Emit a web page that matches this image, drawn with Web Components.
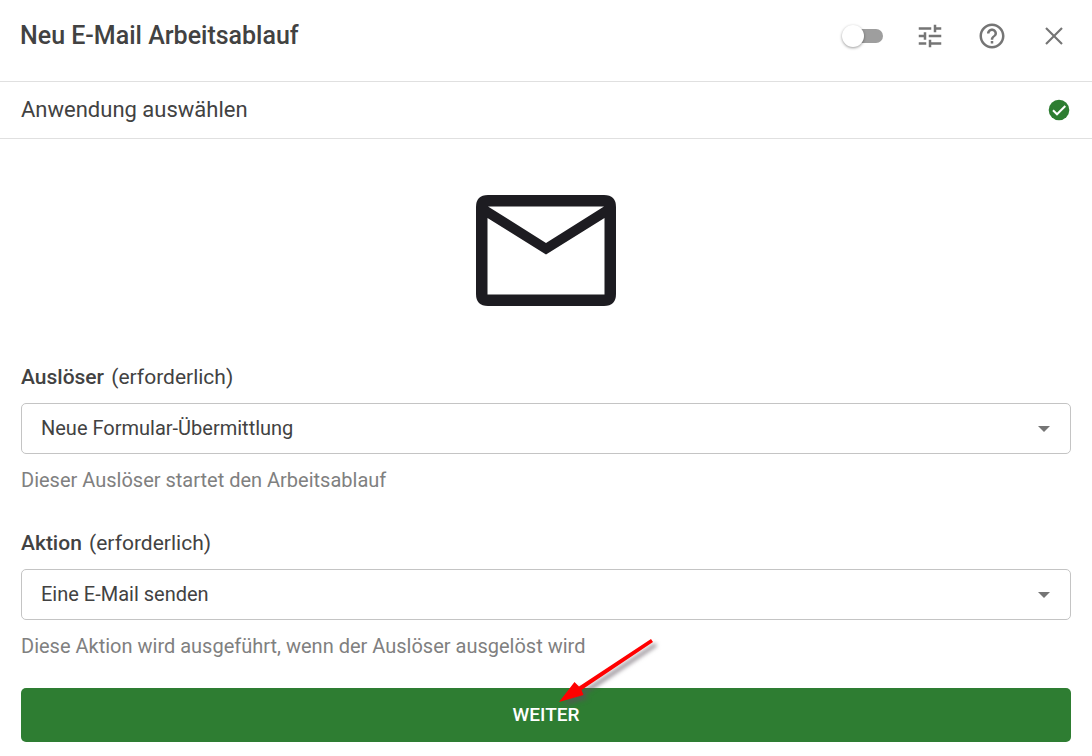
<!DOCTYPE html>
<html lang="de">
<head>
<meta charset="utf-8">
<meta name="viewport" content="width=device-width, initial-scale=1">
<title>Neu E-Mail Arbeitsablauf</title>
<style>
  body {
    margin: 0;
    background: #fff;
    color: #424242;
    font-family: Roboto, "Liberation Sans", sans-serif;
    font-size: 20px;
    line-height: 24px;
  }
</style>
</head>
<body>
<workflow-dialog>
  <dialog-header slot="header">Neu E-Mail Arbeitsablauf</dialog-header>
  <step-heading>Anwendung auswählen</step-heading>
  <app-picture></app-picture>
  <workflow-form>
    <select-field label="Auslöser" option="Neue Formular-Übermittlung">Dieser Auslöser startet den Arbeitsablauf</select-field>
    <select-field label="Aktion" option="Eine E-Mail senden">Diese Aktion wird ausgeführt, wenn der Auslöser ausgelöst wird</select-field>
    <submit-button>WEITER</submit-button>
  </workflow-form>
</workflow-dialog>

<script>
  class BaseElement extends HTMLElement {
    connectedCallback() {
      if (this.shadowRoot) return;
      this.attachShadow({ mode: "open" }).innerHTML = this.render();
    }
  }

  customElements.define("workflow-dialog", class extends BaseElement {
    render() {
      return `
        <style>:host { display: flex; flex-direction: column; }</style>
        <slot name="header"></slot>
        <main><slot></slot></main>`;
    }
  });

  customElements.define("dialog-header", class extends BaseElement {
    render() {
      return `
        <style>
          :host { display: block; border-bottom: 1px solid #e0e0e0; }
          header { display: flex; align-items: center; justify-content: space-between; padding: 16px 23px 25px 20px; }
          h1 { margin: 0; font-size: 25px; line-height: 40px; font-weight: 500; }
          .tools { display: flex; align-items: center; gap: 32px; }
          button { display: flex; border: 0; padding: 0; background: none; color: #757575; cursor: pointer; }
          svg { display: block; width: 30px; height: 30px; fill: currentColor; }
          input {
            appearance: none; display: flex; align-items: center; flex: none;
            width: 40px; height: 14px; margin: 0; border-radius: 7px;
            background: #9e9e9e; cursor: pointer;
          }
          input::before {
            content: ""; width: 22px; height: 22px; margin-left: -1px; flex: none; border-radius: 50%;
            background: #fff; box-shadow: 0 1px 3px rgba(0,0,0,.4);
          }
          input:checked { flex-direction: row-reverse; background: #81b784; }
        </style>
        <header>
          <h1><slot></slot></h1>
          <div class="tools">
            <input type="checkbox" role="switch" aria-label="Aktiv">
            <button type="button" aria-label="Einstellungen"><svg viewBox="0 0 24 24"><path d="M3 17v2h6v-2H3zM3 5v2h10V5H3zm10 16v-2h8v-2h-8v-2h-2v6h2zM7 9v2H3v2h4v2h2V9H7zm14 4v-2H11v2h10zm-6-4h2V7h4V5h-4V3h-2v6z"/></svg></button>
            <button type="button" aria-label="Hilfe"><svg viewBox="0 0 24 24"><path d="M11 18h2v-2h-2v2zm1-16C6.480 2 2 6.480 2 12s4.480 10 10 10 10-4.480 10-10S17.520 2 12 2zm0 18c-4.410 0-8-3.590-8-8s3.590-8 8-8 8 3.590 8 8-3.590 8-8 8zm0-14c-2.210 0-4 1.790-4 4h2c0-1.100.9-2 2-2s2 .9 2 2c0 2-3 1.750-3 5h2c0-2.250 3-2.500 3-5 0-2.210-1.790-4-4-4z"/></svg></button>
            <button type="button" aria-label="Schließen"><svg viewBox="0 0 24 24"><path d="M19 6.200 17.800 5 12 10.800 6.200 5 5 6.200 10.800 12 5 17.800 6.200 19 12 13.200 17.800 19 19 17.800 13.200 12z"/></svg></button>
          </div>
        </header>`;
    }
  });

  customElements.define("step-heading", class extends BaseElement {
    render() {
      return `
        <style>
          :host { display: flex; align-items: center; justify-content: space-between; padding: 12px 22px 12px 21px; border-bottom: 1px solid #e0e0e0; }
          h2 { margin: 0; font-size: 22px; line-height: 32px; font-weight: 400; }
          svg { display: block; width: 22px; height: 22px; }
        </style>
        <h2><slot></slot></h2>
        <svg viewBox="0 0 22 22" role="img" aria-label="Erledigt"><circle cx="11" cy="11" r="10.300" fill="#2e7d32"/><path d="m5 11.300 4 4 8.300-8.300" fill="none" stroke="#fff" stroke-width="2"/></svg>`;
    }
  });

  customElements.define("app-picture", class extends BaseElement {
    render() {
      return `
        <style>
          :host { display: flex; justify-content: center; padding: 56px 20px 50px; }
          svg { display: block; width: 140px; height: 111px; }
        </style>
        <svg viewBox="0 0 140 111" role="img" aria-label="E-Mail"><path fill="#1d1c21" fill-rule="evenodd" d="M12 0h116q12 0 12 12v87q0 12-12 12H12Q0 111 0 99V12Q0 0 12 0zM11.500 23v76.500h117V23L70 59.500zM12 11.500 70 48l58-36.500z"/></svg>`;
    }
  });

  customElements.define("workflow-form", class extends BaseElement {
    render() {
      return `
        <style>
          :host { display: block; padding: 0 21px 14px; }
          form { display: flex; flex-direction: column; gap: 30px; }
        </style>
        <form><slot></slot></form>`;
    }
  });

  customElements.define("select-field", class extends BaseElement {
    render() {
      return `
        <style>
          :host { display: flex; flex-direction: column; padding-top: 7px; }
          label { font-size: 21px; line-height: 28px; }
          b { font-weight: 500; margin-right: 2px; }
          .box { display: grid; align-items: center; margin: 12px 0 14px; }
          .box > * { grid-area: 1 / 1; }
          select {
            appearance: none; width: 100%; height: 51px; padding: 0 48px 2px 19px;
            border: 1px solid #c4c4c4; border-radius: 5px; background: #fff;
            color: inherit; font: inherit;
          }
          svg { display: block; width: 12px; height: 6px; margin-right: 21px; justify-self: end; pointer-events: none; fill: #757575; }
          p { margin: 0; color: #808080; line-height: 24px; }
        </style>
        <label for="choice"><b>${this.getAttribute("label")}</b> (erforderlich)</label>
        <div class="box">
          <select id="choice" aria-describedby="hint"><option>${this.getAttribute("option")}</option></select>
          <svg viewBox="0 0 12 6" aria-hidden="true"><path d="M0 0h12L6 6z"/></svg>
        </div>
        <p id="hint"><slot></slot></p>`;
    }
  });

  customElements.define("submit-button", class extends BaseElement {
    render() {
      return `
        <style>
          :host { display: block; position: relative; }
          button {
            display: block; width: 100%; height: 54px; padding: 0; border: 0; border-radius: 5px;
            background: #2e7d32; color: #fff; font: 500 19px/24px Roboto, "Liberation Sans", sans-serif; cursor: pointer;
          }
          svg { position: absolute; left: 50%; top: -54px; width: 120px; height: 80px; pointer-events: none; filter: drop-shadow(4px 4px 2px rgba(90,80,90,.65)); }
        </style>
        <button type="button"><slot></slot></button>
        <svg viewBox="0 0 120 80" aria-hidden="true"><path fill="#f00" d="M105 5 107 8 35.500 56 37.500 61 13 68 28.500 48 33 52.500z"/></svg>`;
    }
  });
</script>
</body>
</html>
